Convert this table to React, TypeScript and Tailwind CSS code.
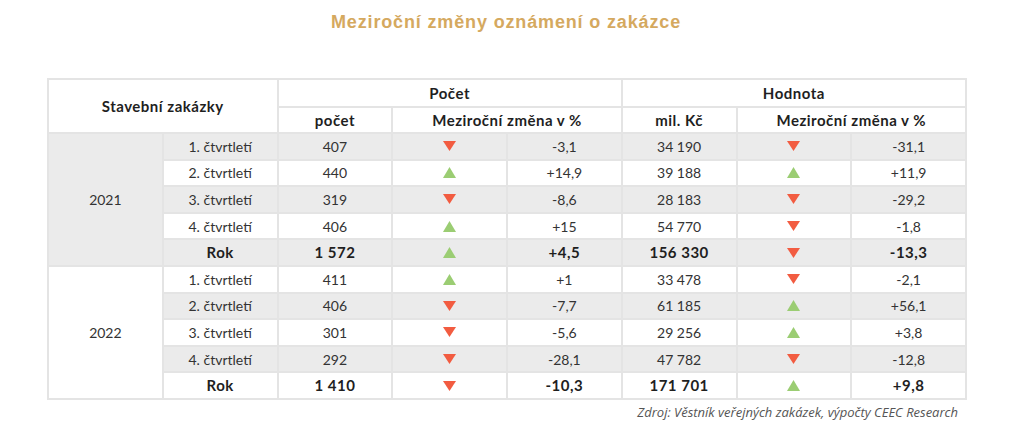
import React from "react";

type Row = {
  label: string;
  count: string;
  countUp: boolean;
  countPct: string;
  value: string;
  valueUp: boolean;
  valuePct: string;
};

const years: { year: string; rows: Row[] }[] = [
  {
    year: "2021",
    rows: [
      { label: "1. čtvrtletí", count: "407", countUp: false, countPct: "-3,1", value: "34 190", valueUp: false, valuePct: "-31,1" },
      { label: "2. čtvrtletí", count: "440", countUp: true, countPct: "+14,9", value: "39 188", valueUp: true, valuePct: "+11,9" },
      { label: "3. čtvrtletí", count: "319", countUp: false, countPct: "-8,6", value: "28 183", valueUp: false, valuePct: "-29,2" },
      { label: "4. čtvrtletí", count: "406", countUp: true, countPct: "+15", value: "54 770", valueUp: false, valuePct: "-1,8" },
      { label: "Rok", count: "1 572", countUp: true, countPct: "+4,5", value: "156 330", valueUp: false, valuePct: "-13,3" },
    ],
  },
  {
    year: "2022",
    rows: [
      { label: "1. čtvrtletí", count: "411", countUp: true, countPct: "+1", value: "33 478", valueUp: false, valuePct: "-2,1" },
      { label: "2. čtvrtletí", count: "406", countUp: false, countPct: "-7,7", value: "61 185", valueUp: true, valuePct: "+56,1" },
      { label: "3. čtvrtletí", count: "301", countUp: false, countPct: "-5,6", value: "29 256", valueUp: true, valuePct: "+3,8" },
      { label: "4. čtvrtletí", count: "292", countUp: false, countPct: "-28,1", value: "47 782", valueUp: false, valuePct: "-12,8" },
      { label: "Rok", count: "1 410", countUp: false, countPct: "-10,3", value: "171 701", valueUp: true, valuePct: "+9,8" },
    ],
  },
];

function Arrow({ up }: { up: boolean }) {
  return up ? (
    <svg width="13" height="11" viewBox="0 0 13 11" className="mx-auto block">
      <polygon points="6.5,0 13,11 0,11" fill="#9bcd73" />
    </svg>
  ) : (
    <svg width="13" height="10" viewBox="0 0 13 10" className="mx-auto block">
      <polygon points="0,0 13,0 6.5,10" fill="#f25c41" />
    </svg>
  );
}

const cell = "border-2 border-[#e4e4e4] text-center align-middle";
const head = "text-[15px] font-bold tracking-[0.5px] text-[#1f1f1f]";

export default function App() {
  return (
    <div className="w-[1024px] h-[436px] bg-white font-['Lato',sans-serif] text-[#2b2b2b]">
      <div className="ml-[47px] w-[918px] pt-[11px]">
        <h1 className="text-center font-['Liberation_Sans',sans-serif] text-[18px] leading-[22px] font-bold tracking-[0.85px] text-[#d5a95f]">
          Meziroční změny oznámení o zakázce
        </h1>
        <table className="mt-[45px] w-[918px] table-fixed border-collapse text-[14px]">
          <colgroup>
            {Array.from({ length: 8 }, (_, i) => (
              <col key={i} className="w-[114.75px]" />
            ))}
          </colgroup>
          <thead>
            <tr className="h-[28px]">
              <th colSpan={2} rowSpan={2} className={`${cell} ${head}`}>
                Stavební zakázky
              </th>
              <th colSpan={3} className={`${cell} ${head}`}>Počet</th>
              <th colSpan={3} className={`${cell} ${head}`}>Hodnota</th>
            </tr>
            <tr className="h-[26px]">
              <th className={`${cell} ${head}`}>počet</th>
              <th colSpan={2} className={`${cell} ${head}`}>Meziroční změna v %</th>
              <th className={`${cell} ${head}`}>mil. Kč</th>
              <th colSpan={2} className={`${cell} ${head}`}>Meziroční změna v %</th>
            </tr>
          </thead>
          <tbody>
            {years.map((y, yi) =>
              y.rows.map((r, ri) => {
                const gray = (ri + yi) % 2 === 0;
                const bold = r.label === "Rok";
                const rowCls = gray ? "bg-[#ebebeb]" : "bg-white";
                const txt = bold ? head : "text-[#333]";
                return (
                  <tr key={y.year + ri} className={`h-[26.6px] ${rowCls}`}>
                    {ri === 0 && (
                      <td rowSpan={5} className={`${cell} text-[#333] ${yi === 0 ? "bg-[#ebebeb]" : "bg-white"}`}>
                        {y.year}
                      </td>
                    )}
                    <td className={`${cell} ${txt}`}>{r.label}</td>
                    <td className={`${cell} ${txt}`}>{r.count}</td>
                    <td className={cell}>
                      <Arrow up={r.countUp} />
                    </td>
                    <td className={`${cell} ${txt}`}>{r.countPct}</td>
                    <td className={`${cell} ${txt}`}>{r.value}</td>
                    <td className={cell}>
                      <Arrow up={r.valueUp} />
                    </td>
                    <td className={`${cell} ${txt}`}>{r.valuePct}</td>
                  </tr>
                );
              })
            )}
          </tbody>
        </table>
        <p className="mt-[3px] pr-[7px] text-right font-['Open_Sans',sans-serif] text-[13px] italic leading-[18px] text-[#555]">
          Zdroj: Věstník veřejných zakázek, výpočty CEEC Research
        </p>
      </div>
    </div>
  );
}
